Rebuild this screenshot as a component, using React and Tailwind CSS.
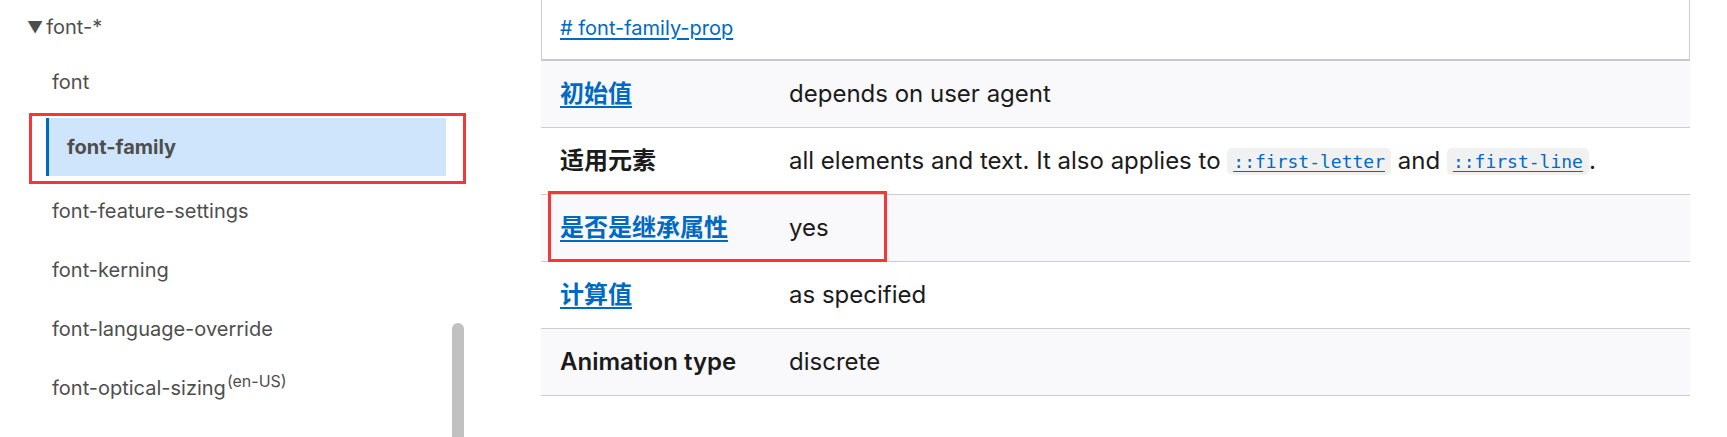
import React from "react";

const navItem = "h-[59px] flex items-center pl-[52px] text-[20px] text-[#4e4e4e]";

function Code({ children }) {
  return (
    <code className="inline-block bg-[#f2f1f1] rounded-[5px] px-[6px] leading-[27px] align-[1px] text-[18px] text-[#0069c2] underline underline-offset-[3px] [font-family:'DejaVu_Sans_Mono','Liberation_Mono',monospace]">
      {children}
    </code>
  );
}

function Row({ label, link, striped, children, annotate, semibold }) {
  return (
    <div className={`relative flex h-[67px] items-center border-b border-[#cdcdcd] ${striped ? "bg-[#f9f9fb]" : "bg-white"}`}>
      <div className={`w-[248px] pl-[19px] shrink-0 text-[24px] ${semibold ? "font-semibold" : "font-bold"}`}>
        {link ? (
          <span className="text-[#0069c2] underline underline-offset-[4px]">{label}</span>
        ) : (
          <span className="text-[#1b1b1b]">{label}</span>
        )}
      </div>
      <div className="text-[24px] text-[#1b1b1b]">{children}</div>
      {annotate && (
        <div className="absolute left-[7px] top-[-4px] w-[339px] h-[71px] border-[3px] border-[#f43838]" />
      )}
    </div>
  );
}

export default function App() {
  return (
    <div className="flex w-[1727px] h-[437px] overflow-hidden bg-white [font-family:Inter,'Noto_Sans_CJK_SC',sans-serif]">
      <div className="relative w-[541px] shrink-0">
        <div className="h-[54px] flex items-center pl-[27px] text-[20px] text-[#4e4e4e]">
          <span className="text-[16px] mr-[3px]">▼</span>font-*
        </div>
        <div className="h-[56px] flex items-center pl-[52px] text-[20px] text-[#4e4e4e]">font</div>
        <div className="relative pt-[8px] pb-[5px]">
          <div className="ml-[46px] w-[400px] h-[58px] bg-[#cfe5fc] border-l-[3px] border-[#0069c2] flex items-center pl-[18px] text-[20px] font-bold text-[#4e4e4e]">
            font-family
          </div>
          <div className="absolute left-[29px] top-[3px] w-[437px] h-[71px] border-[3px] border-[#f43838]" />
        </div>
        <div className={navItem}>font-feature-settings</div>
        <div className={navItem}>font-kerning</div>
        <div className={navItem}>font-language-override</div>
        <div className={navItem}>
          font-optical-sizing<sup className="text-[16px] top-[-0.4em] ml-[1px]">(en-US)</sup>
        </div>
        <div className="absolute left-[452px] top-[323px] w-[12px] h-[140px] rounded-t-full bg-[#c1c1c1]" />
      </div>

      <div className="w-[1149px] shrink-0">
        <div className="h-[61px] border-x border-[#cdcdcd] border-b-2 border-b-[#c8c8c8] flex items-center pl-[18px] pb-[4px]">
          <span className="text-[20px] text-[#0069c2] underline underline-offset-[3px]"># font-family-prop</span>
        </div>
        <Row label="初始值" link striped>depends on user agent</Row>
        <Row label="适用元素">
          all elements and text. It also applies to <Code>::first-letter</Code> and <Code>::first-line</Code>.
        </Row>
        <Row label="是否是继承属性" link striped annotate>yes</Row>
        <Row label="计算值" link>as specified</Row>
        <Row label="Animation type" striped semibold>discrete</Row>
      </div>
    </div>
  );
}
